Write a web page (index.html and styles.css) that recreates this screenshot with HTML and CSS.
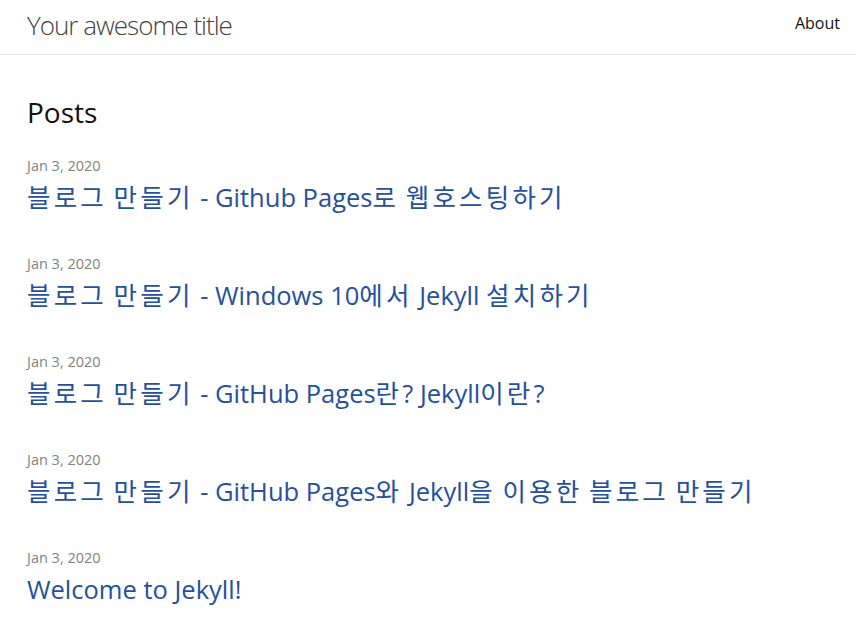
FILE: index.html
```html
<!DOCTYPE html>
<html lang="ko">
<head>
<meta charset="utf-8">
<title>Your awesome title</title>
<link rel="stylesheet" href="styles.css">
</head>
<body>
<header class="site-header">
  <div class="wrapper header-inner">
    <a class="site-title" href="#">Your awesome title</a>
    <nav class="site-nav"><a class="page-link" href="#">About</a></nav>
  </div>
</header>
<main class="page-content">
  <div class="wrapper">
    <h2 class="post-list-heading">Posts</h2>
    <ul class="post-list">
      <li class="post-item">
        <span class="post-meta">Jan 3, 2020</span>
        <h3 class="post-title"><a class="post-link" href="#"><span class="ko">블로그</span> <span class="ko">만들기</span> - Github Pages<span class="ko">로</span> <span class="ko">웹호스팅하기</span></a></h3>
      </li>
      <li class="post-item">
        <span class="post-meta">Jan 3, 2020</span>
        <h3 class="post-title"><a class="post-link" href="#"><span class="ko">블로그</span> <span class="ko">만들기</span> - Windows 10<span class="ko">에서</span> Jekyll <span class="ko">설치하기</span></a></h3>
      </li>
      <li class="post-item">
        <span class="post-meta">Jan 3, 2020</span>
        <h3 class="post-title"><a class="post-link" href="#"><span class="ko">블로그</span> <span class="ko">만들기</span> - GitHub Pages<span class="ko">란</span>? Jekyll<span class="ko">이란</span>?</a></h3>
      </li>
      <li class="post-item">
        <span class="post-meta">Jan 3, 2020</span>
        <h3 class="post-title"><a class="post-link" href="#"><span class="ko">블로그</span> <span class="ko">만들기</span> - GitHub Pages<span class="ko">와</span> Jekyll<span class="ko">을</span> <span class="ko">이용한</span> <span class="ko">블로그</span> <span class="ko">만들기</span></a></h3>
      </li>
      <li class="post-item">
        <span class="post-meta">Jan 3, 2020</span>
        <h3 class="post-title"><a class="post-link" href="#">Welcome to Jekyll!</a></h3>
      </li>
    </ul>
  </div>
</main>
</body>
</html>
```
FILE: styles.css
```css
* { box-sizing: border-box; }
html, body { margin: 0; padding: 0; }
body {
  font-family: "Open Sans", "Noto Sans CJK KR", sans-serif;
  font-size: 16px;
  line-height: 1.5;
  color: #111;
  background: #fff;
}
a { text-decoration: none; }
.wrapper {
  padding: 0 16px 0 27px;
}
.site-header {
  border-bottom: 1px solid #e8e8e8;
}
.header-inner {
  display: flex;
  justify-content: space-between;
  align-items: flex-start;
  height: 54px;
}
.site-title {
  font-size: 26px;
  font-weight: 300;
  line-height: 50px;
  letter-spacing: -1px;
  color: #424242;
}
.page-link {
  display: block;
  font-size: 16px;
  line-height: 46px;
  color: #111;
}
.page-content {
  padding-top: 36px;
}
.post-list-heading {
  margin: 0;
  font-size: 28px;
  font-weight: 400;
  line-height: 42px;
  color: #111;
}
.post-list {
  list-style: none;
  margin: 22px 0 0;
  padding: 0;
  display: flex;
  flex-direction: column;
  gap: 35px;
}
.post-item {
  display: flex;
  flex-direction: column;
}
.post-meta {
  font-size: 14.5px;
  line-height: 21px;
  color: #828282;
}
.post-title {
  margin: 0;
  font-size: 25.5px;
  font-weight: 400;
  line-height: 42px;
}
.post-link {
  color: #27509a;
}
.ko {
  letter-spacing: 3.2px;
}
```
